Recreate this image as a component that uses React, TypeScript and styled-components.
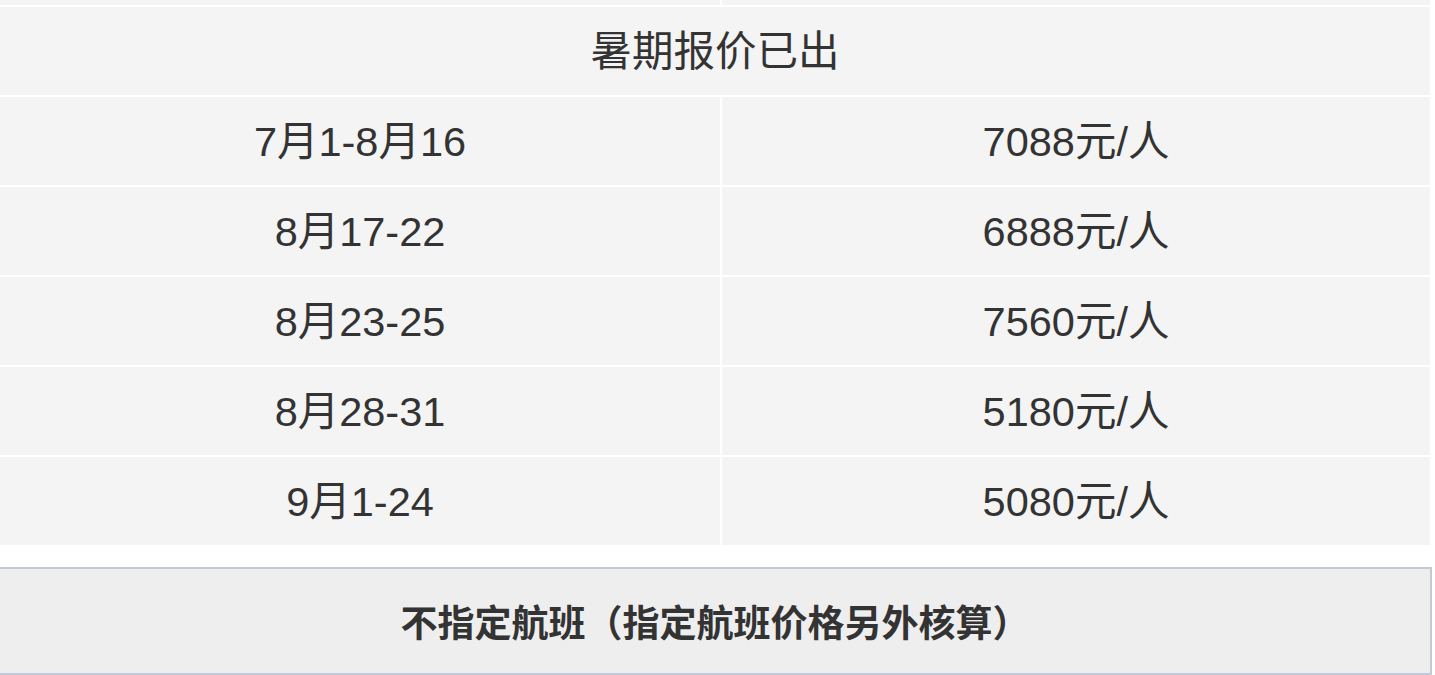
import React from "react";
import styled, { createGlobalStyle } from "styled-components";

const GlobalStyle = createGlobalStyle`
  html, body {
    margin: 0;
    padding: 0;
    background: #ffffff;
  }
  body {
    font-family: "Liberation Sans", Arial, "Noto Sans CJK SC", sans-serif;
    color: #333333;
    overflow: hidden;
  }
`;

interface PriceRow {
  period: string;
  price: string;
}

const rows: PriceRow[] = [
  { period: "7月1-8月16", price: "7088元/人" },
  { period: "8月17-22", price: "6888元/人" },
  { period: "8月23-25", price: "7560元/人" },
  { period: "8月28-31", price: "5180元/人" },
  { period: "9月1-24", price: "5080元/人" },
];

const Page = styled.div`
  width: 1435px;
  height: 675px;
  overflow: hidden;
`;

const PriceTable = styled.div`
  display: grid;
  grid-template-columns: 720px 708px;
  grid-auto-rows: 88px;
  gap: 2px;
  width: 1430px;
`;

// sliver of the row above, cut off by the viewport
const Stub = styled.div`
  height: 5px;
  background: #f4f4f4;
`;

const StubRow = styled.div`
  display: grid;
  grid-template-columns: 720px 708px;
  gap: 2px;
  width: 1430px;
  margin-bottom: 2px;
`;

const Cell = styled.div<{ $wide?: boolean }>`
  grid-column: ${({ $wide }) => ($wide ? "1 / span 2" : "auto")};
  display: flex;
  align-items: center;
  justify-content: center;
  padding-bottom: 6px;
  box-sizing: border-box;
  background: #f4f4f4;
  font-size: 41.5px;
  color: #333333;
  font-family: "Liberation Sans", Arial, "Noto Sans CJK SC", sans-serif;
`;

const Notice = styled.div`
  box-sizing: border-box;
  margin: 22px 0 0 -2px;
  width: 1434px;
  height: 108px;
  border: 2px solid #c4cad5;
  background: #eeeeee;
  display: flex;
  align-items: center;
  justify-content: center;
  font-size: 37px;
  font-weight: bold;
  color: #333333;
  font-family: "Noto Sans CJK SC", "Liberation Sans", sans-serif;
`;

const App: React.FC = () => (
  <>
    <GlobalStyle />
    <Page>
      <StubRow>
        <Stub />
        <Stub />
      </StubRow>
      <PriceTable>
        <Cell $wide>暑期报价已出</Cell>
        {rows.map(row => (
          <React.Fragment key={row.period}>
            <Cell>{row.period}</Cell>
            <Cell>{row.price}</Cell>
          </React.Fragment>
        ))}
      </PriceTable>
      <Notice>不指定航班（指定航班价格另外核算）</Notice>
    </Page>
  </>
);

export default App;
